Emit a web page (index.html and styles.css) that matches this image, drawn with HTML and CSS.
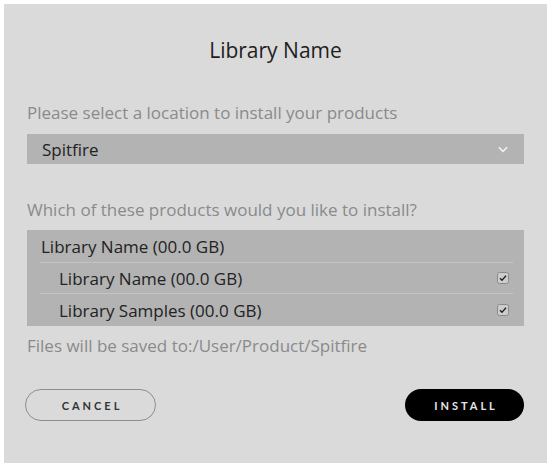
FILE: index.html
```html
<!DOCTYPE html>
<html>
<head>
<meta charset="utf-8">
<link rel="stylesheet" href="styles.css">
</head>
<body>
<div class="dialog">
  <h1 class="title">Library Name</h1>
  <div class="label label-first">Please select a location to install your products</div>
  <div class="select">
    <span>Spitfire</span>
    <svg class="chev" width="10" height="7" viewBox="0 0 10 7"><path d="M0.8 1.2 L5 5.4 L9.2 1.2" fill="none" stroke="#f4f4f4" stroke-width="1.5"/></svg>
  </div>
  <div class="label label-second">Which of these products would you like to install?</div>
  <div class="list">
    <div class="row row-head"><span>Library Name (00.0 GB)</span></div>
    <div class="row row-sub"><span>Library Name (00.0 GB)</span><span class="check"><svg width="12" height="12" viewBox="0 0 12 12"><rect x="0.5" y="0.5" width="11" height="11" rx="2" fill="#cdcdcd" stroke="#8a8a8a"/><path d="M3 6.2 L5 8.2 L9 3.8" fill="none" stroke="#222" stroke-width="1.4"/></svg></span></div>
    <div class="row row-sub"><span>Library Samples (00.0 GB)</span><span class="check"><svg width="12" height="12" viewBox="0 0 12 12"><rect x="0.5" y="0.5" width="11" height="11" rx="2" fill="#cdcdcd" stroke="#8a8a8a"/><path d="M3 6.2 L5 8.2 L9 3.8" fill="none" stroke="#222" stroke-width="1.4"/></svg></span></div>
  </div>
  <div class="label label-files">Files will be saved to:/User/Product/Spitfire</div>
  <div class="actions">
    <button class="btn btn-cancel">CANCEL</button>
    <button class="btn btn-install">INSTALL</button>
  </div>
</div>
</body>
</html>
```
FILE: styles.css
```css
html, body {
  margin: 0;
  padding: 0;
  background: #ffffff;
}
body {
  padding: 4px;
  font-family: "Open Sans", Lato, sans-serif;
}
.dialog {
  width: 543px;
  height: 459px;
  box-sizing: border-box;
  background: #dadada;
  padding: 0 23px 0 23px;
  display: flex;
  flex-direction: column;
}
.title {
  margin: 33px 0 0 0;
  font-size: 21px;
  font-weight: 400;
  color: #1e1e1e;
  text-align: center;
  line-height: 26px;
}
.label {
  font-size: 17px;
  color: #8a8a8a;
  line-height: 20px;
}
.label-first {
  margin-top: 40px;
}
.select {
  margin-top: 11px;
  height: 30px;
  background: #b3b3b3;
  display: flex;
  align-items: center;
  justify-content: space-between;
  padding: 0 16px 0 15px;
  font-size: 17px;
  color: #222;
}
.chev {
  display: block;
}
.label-second {
  margin-top: 36px;
}
.list {
  margin-top: 10px;
  background: #b3b3b3;
  padding: 0 11px 0 13px;
}
.row {
  height: 30px;
  display: flex;
  align-items: center;
  justify-content: space-between;
  font-size: 17px;
  color: #222;
  border-top: 1px solid #c4c4c4;
}
.row-head {
  border-top: none;
  height: 32px;
  padding-left: 1px;
}
.row-sub:last-child {
  height: 32px;
}
.row-sub {
  padding-left: 19px;
}
.check {
  display: flex;
  margin-right: 4px;
}
.label-files {
  margin-top: 10px;
}
.actions {
  margin-top: 33px;
  display: flex;
  justify-content: space-between;
  align-items: center;
}
.btn {
  font-family: Lato, "Open Sans", sans-serif;
  font-size: 11px;
  font-weight: 700;
  letter-spacing: 3px;
  border-radius: 16px;
  height: 32px;
  padding: 0 0 0 3px;
}
.btn-cancel {
  width: 131px;
  margin-left: -2px;
  background: transparent;
  border: 1px solid #8e8e8e;
  color: #333;
}
.btn-install {
  width: 119px;
  background: #000;
  border: none;
  color: #e6e6e6;
}
```
